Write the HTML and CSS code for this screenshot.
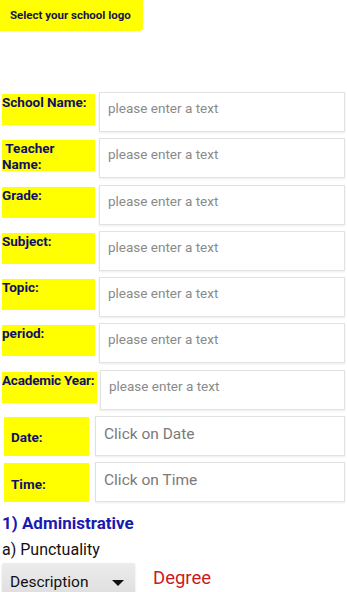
FILE: index.html
```html
<!DOCTYPE html>
<html>
<head>
<meta charset="utf-8">
<link rel="stylesheet" href="styles.css">
</head>
<body>
<div class="page">
  <div class="logo-btn">Select your school logo</div>
  <div class="form">
    <div class="row"><div class="label">School Name:</div><div class="input">please enter a text</div></div>
    <div class="row"><div class="label">&nbsp;Teacher Name:</div><div class="input">please enter a text</div></div>
    <div class="row"><div class="label">Grade:</div><div class="input">please enter a text</div></div>
    <div class="row"><div class="label">Subject:</div><div class="input">please enter a text</div></div>
    <div class="row"><div class="label">Topic:</div><div class="input">please enter a text</div></div>
    <div class="row"><div class="label">period:</div><div class="input">please enter a text</div></div>
    <div class="row"><div class="label wide">Academic Year:</div><div class="input">please enter a text</div></div>
    <div class="row dt"><div class="label dlabel">Date:</div><div class="input dinput">Click on Date</div></div>
    <div class="row dt"><div class="label dlabel">Time:</div><div class="input dinput">Click on Time</div></div>
  </div>
  <div class="section">1) Administrative</div>
  <div class="sub">a) Punctuality</div>
  <div class="bottom">
    <div class="select">Description<span class="arrow"></span></div>
    <div class="degree">Degree</div>
  </div>
</div>
</body>
</html>
```
FILE: styles.css
```css
html, body {
  margin: 0;
  padding: 0;
  background: #fff;
}
body {
  font-family: Roboto, "Liberation Sans", Arial, sans-serif;
  width: 347px;
  height: 592px;
  overflow: hidden;
}
.logo-btn {
  width: 143px;
  height: 31px;
  box-sizing: border-box;
  background: #ffff00;
  border-radius: 0 0 4px 0;
  color: #15154a;
  font-weight: bold;
  font-size: 11.5px;
  padding: 8px 0 0 10px;
  line-height: 14px;
  white-space: nowrap;
}
.form {
  margin-top: 61px;
  display: flex;
  flex-direction: column;
  gap: 6.3px;
}
.row {
  display: flex;
  align-items: flex-start;
  height: 40px;
}
.label {
  margin: 2px 0 0 2px;
  width: 93px;
  height: 31px;
  background: #ffff00;
  color: #10106a;
  font-weight: bold;
  font-size: 13.5px;
  line-height: 15.5px;
  padding-top: 1px;
  box-sizing: border-box;
  flex-shrink: 0;
}
.label.wide {
  width: 95px;
  white-space: nowrap;
  letter-spacing: -0.2px;
}
.input {
  margin-left: 4px;
  flex: 1;
  margin-right: 2px;
  height: 40px;
  box-sizing: border-box;
  border: 1px solid #e2e2e2;
  box-shadow: 0 1px 2px rgba(0,0,0,0.08);
  background: #fff;
  color: #8a8a8a;
  font-size: 13.5px;
  padding: 7px 0 0 8px;
  line-height: 16px;
}
.label.wide + .input {
  margin-left: 3px;
  padding-left: 8px;
}
.dt .dlabel {
  margin: 1px 0 0 4px;
  width: 85px;
  height: 39px;
  padding: 0 0 0 7px;
  display: flex;
  align-items: center;
  padding-top: 3px;
  font-size: 13.5px;
}
.dt .dinput {
  margin-left: 6px;
  color: #7a7a7a;
  font-size: 15.5px;
  padding: 8px 0 0 8px;
  line-height: 18px;
}
.section {
  margin: 11px 0 0 2px;
  color: #1a1ab0;
  font-weight: bold;
  font-size: 17px;
  line-height: 20px;
}
.sub {
  margin: 7px 0 0 2px;
  color: #111;
  font-size: 16px;
  line-height: 19px;
}
.bottom {
  display: flex;
  align-items: flex-start;
  margin-top: 4px;
}
.select {
  margin-left: 2px;
  width: 133px;
  height: 34px;
  box-sizing: border-box;
  background: linear-gradient(#ececec, #dedede);
  border-radius: 2px;
  box-shadow: 0 1px 2px rgba(0,0,0,0.15);
  color: #111;
  font-size: 15.5px;
  padding: 10px 0 0 8px;
  line-height: 18px;
  position: relative;
}
.arrow {
  position: absolute;
  left: 110px;
  top: 17px;
  width: 0;
  height: 0;
  border-left: 6px solid transparent;
  border-right: 6px solid transparent;
  border-top: 6px solid #111;
}
.degree {
  margin: 4px 0 0 18px;
  color: #cc1a1a;
  font-size: 18.5px;
  line-height: 22px;
}
```
